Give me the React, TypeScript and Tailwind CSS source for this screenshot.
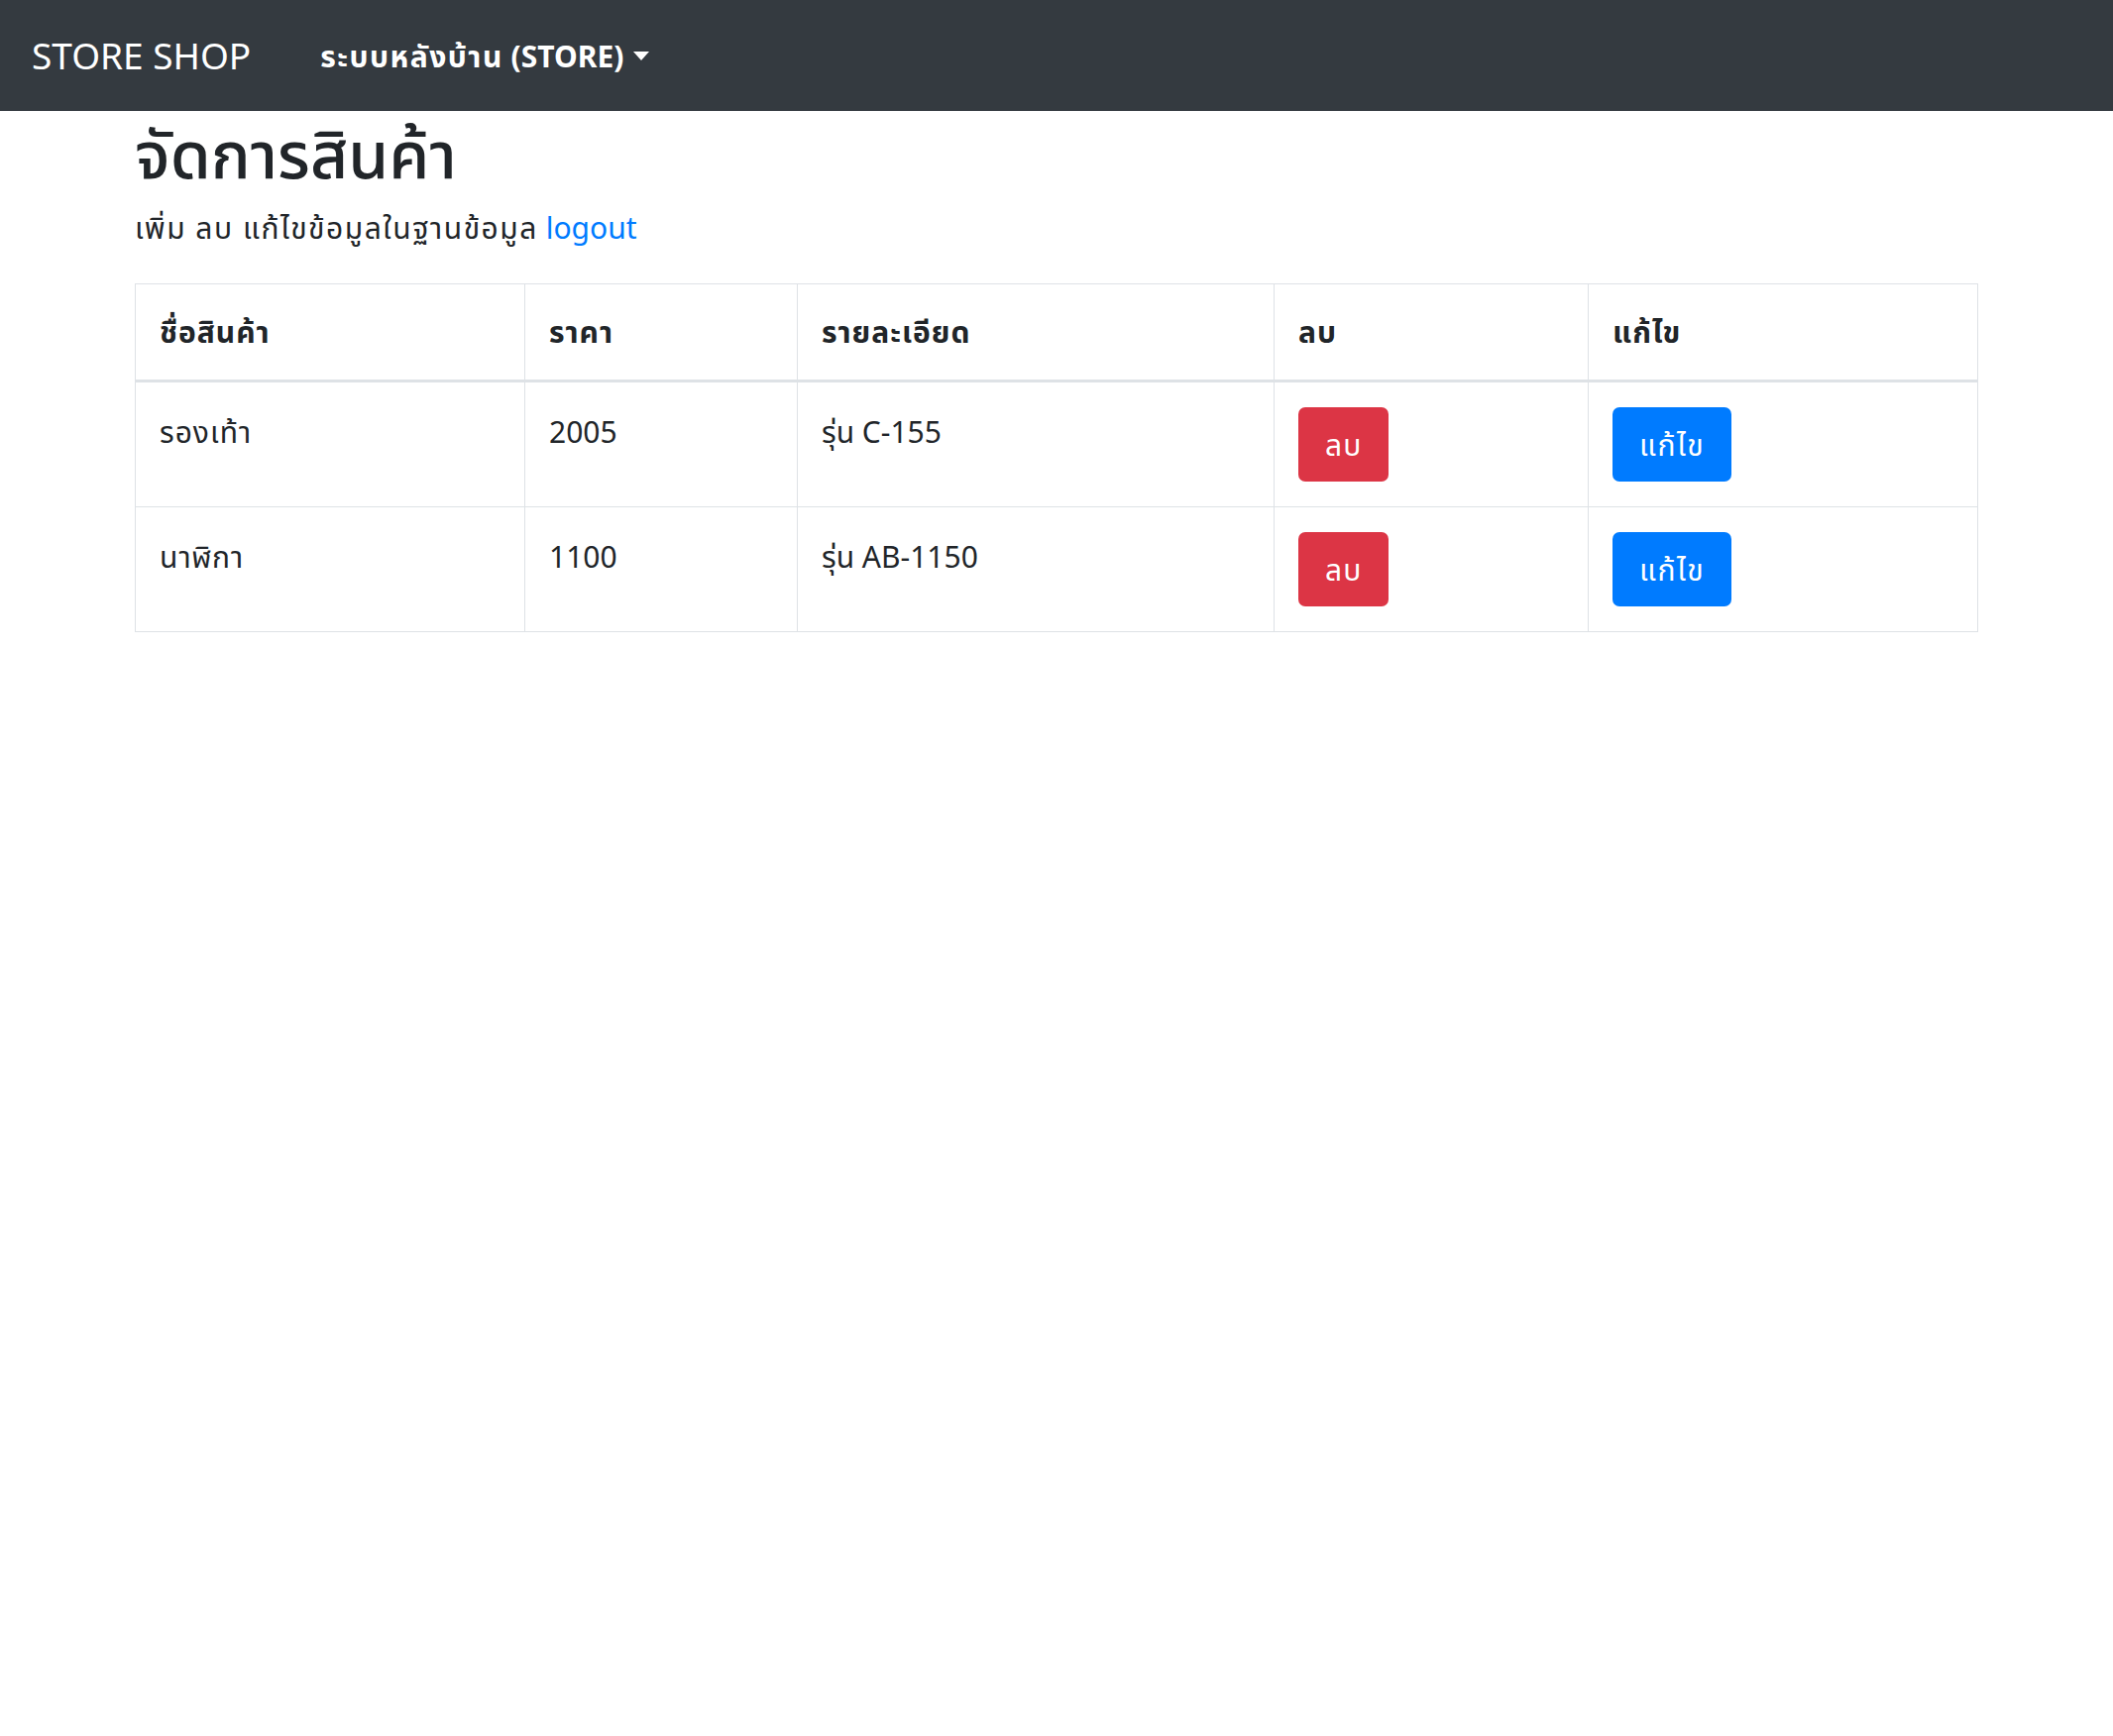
const FONT = '"Noto Sans", "Noto Sans Thai", "Open Sans", sans-serif';

const products = [
  { name: 'รองเท้า', price: 2005, detail: 'รุ่น C-155' },
  { name: 'นาฬิกา', price: 1100, detail: 'รุ่น AB-1150' },
];

const th = 'border border-b-[3px] border-[#dee2e6] px-[24px] py-[25px] align-top font-bold leading-[46px] tracking-[1px]';
const td = 'border border-[#dee2e6] px-[24px] py-[25px] align-top leading-[49px]';

export default function App() {
  return (
    <div className="min-h-screen bg-white text-[#212529]" style={{ fontFamily: FONT }}>
      {/* Navbar */}
      <nav className="flex h-[112px] items-center bg-[#343a40] px-[32px]">
        <span className="mr-[70px] text-[37px] text-white">STORE SHOP</span>
        <button type="button" className="flex items-center text-[30px] font-bold text-white">
          <span className="tracking-[1.5px]">ระบบหลังบ้าน</span>&nbsp;(STORE)
          <span className="ml-[10px] inline-block border-x-[8px] border-t-[9px] border-x-transparent border-t-white" />
        </button>
      </nav>

      <main className="px-[136px]">
        <h1 className="text-[66px] font-medium leading-[84px]">จัดการสินค้า</h1>
        <p className="mt-[11px] text-[30px] leading-[45px]">
          <span className="tracking-[1.5px]">เพิ่ม ลบ แก้ไขข้อมูลในฐานข้อมูล</span>{' '}
          <a href="#" className="text-[#007bff]">logout</a>
        </p>

        <table className="mt-[34px] w-full border-collapse border border-[#dee2e6] text-left text-[30px]">
          <thead>
            <tr>
              <th className={`w-[393px] ${th}`}>ชื่อสินค้า</th>
              <th className={`w-[275px] ${th}`}>ราคา</th>
              <th className={`w-[481px] ${th}`}>รายละเอียด</th>
              <th className={`w-[317px] ${th}`}>ลบ</th>
              <th className={th}>แก้ไข</th>
            </tr>
          </thead>
          <tbody>
            {products.map((p) => (
              <tr key={p.name}>
                <td className={`${td} tracking-[1px]`}>{p.name}</td>
                <td className={td}>{p.price}</td>
                <td className={td}>{p.detail}</td>
                <td className="border border-[#dee2e6] px-[24px] py-[25px] align-top">
                  <button type="button" className="flex h-[75px] items-center rounded-[7px] bg-[#dc3545] px-[27px] tracking-[1px] text-white">
                    ลบ
                  </button>
                </td>
                <td className="border border-[#dee2e6] px-[24px] py-[25px] align-top">
                  <button type="button" className="flex h-[75px] items-center rounded-[7px] bg-[#007bff] px-[27px] tracking-[1.5px] text-white">
                    แก้ไข
                  </button>
                </td>
              </tr>
            ))}
          </tbody>
        </table>
      </main>
    </div>
  );
}
